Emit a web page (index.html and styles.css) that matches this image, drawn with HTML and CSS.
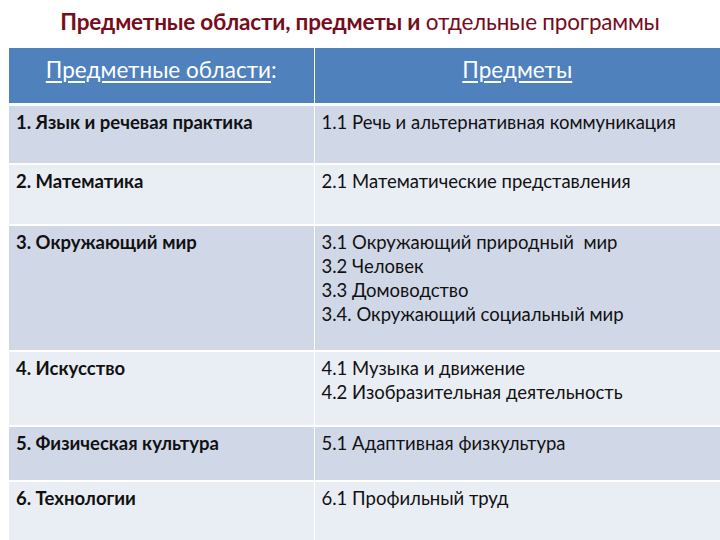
FILE: index.html
```html
<!DOCTYPE html>
<html lang="ru">
<head>
<meta charset="utf-8">
<link rel="stylesheet" href="styles.css">
</head>
<body>
<div class="slide">
  <h1 class="title"><b>Предметные области, предметы и</b> отдельные программы</h1>
  <table class="grid">
    <colgroup><col class="c1"><col class="c2"></colgroup>
    <thead>
      <tr><th><u>Предметные области</u>:</th><th><u>Предметы</u></th></tr>
    </thead>
    <tbody>
      <tr class="odd r1"><td class="area">1. Язык и речевая практика</td><td>1.1 Речь и альтернативная коммуникация</td></tr>
      <tr class="even r2"><td class="area">2. Математика</td><td>2.1 Математические представления</td></tr>
      <tr class="odd r3"><td class="area">3. Окружающий мир</td><td>3.1 Окружающий природный&nbsp; мир<br>3.2 Человек<br>3.3 Домоводство<br>3.4. Окружающий социальный мир</td></tr>
      <tr class="even r4"><td class="area">4. Искусство</td><td>4.1 Музыка и движение<br>4.2 Изобразительная деятельность</td></tr>
      <tr class="odd r5"><td class="area">5. Физическая культура</td><td>5.1 Адаптивная физкультура</td></tr>
      <tr class="even r6"><td class="area">6. Технологии</td><td>6.1 Профильный труд</td></tr>
    </tbody>
  </table>
</div>
</body>
</html>
```
FILE: styles.css
```css
html, body {
  margin: 0;
  padding: 0;
  background: #ffffff;
}
.slide {
  width: 720px;
  height: 540px;
  overflow: hidden;
  font-family: "Lato", "Open Sans", sans-serif;
}
.title {
  margin: 0;
  height: 48px;
  padding-top: 8px;
  box-sizing: border-box;
  text-align: center;
  font-size: 22.5px;
  line-height: 28px;
  font-weight: normal;
  color: #760c1c;
  letter-spacing: -0.2px;
  white-space: nowrap;
}
.title b {
  font-weight: bold;
}
.grid {
  margin-left: 9px;
  width: 711px;
  border-collapse: collapse;
  table-layout: fixed;
}
.c1 { width: 305px; }
.c2 { width: 406px; }
.grid th {
  background: #4f81bd;
  color: #ffffff;
  font-weight: normal;
  font-size: 22.5px;
  line-height: 28px;
  height: 56px;
  vertical-align: top;
  padding: 8px 0 0 0;
  box-sizing: border-box;
  border-right: 1px solid #ffffff;
  border-bottom: 3px solid #ffffff;
  text-align: center;
}
.grid th:last-child,
.grid td:last-child {
  border-right: none;
}
.grid th u {
  text-decoration-thickness: 2px;
  text-underline-offset: 3px;
}
.grid td {
  vertical-align: top;
  font-size: 18.5px;
  line-height: 24px;
  color: #111111;
  padding: 4px 6px 0 7px;
  box-sizing: border-box;
  border-right: 1px solid #ffffff;
  border-bottom: 2px solid #ffffff;
  white-space: nowrap;
}
.grid td.area {
  font-weight: bold;
}
.odd td { background: #d0d8e8; }
.even td { background: #e9edf4; }
.r1 td { height: 60px; }
.r2 td { height: 61px; }
.r3 td { height: 126px; }
.r4 td { height: 75px; }
.r5 td { height: 55px; }
.r6 td { height: 60px; }
```
